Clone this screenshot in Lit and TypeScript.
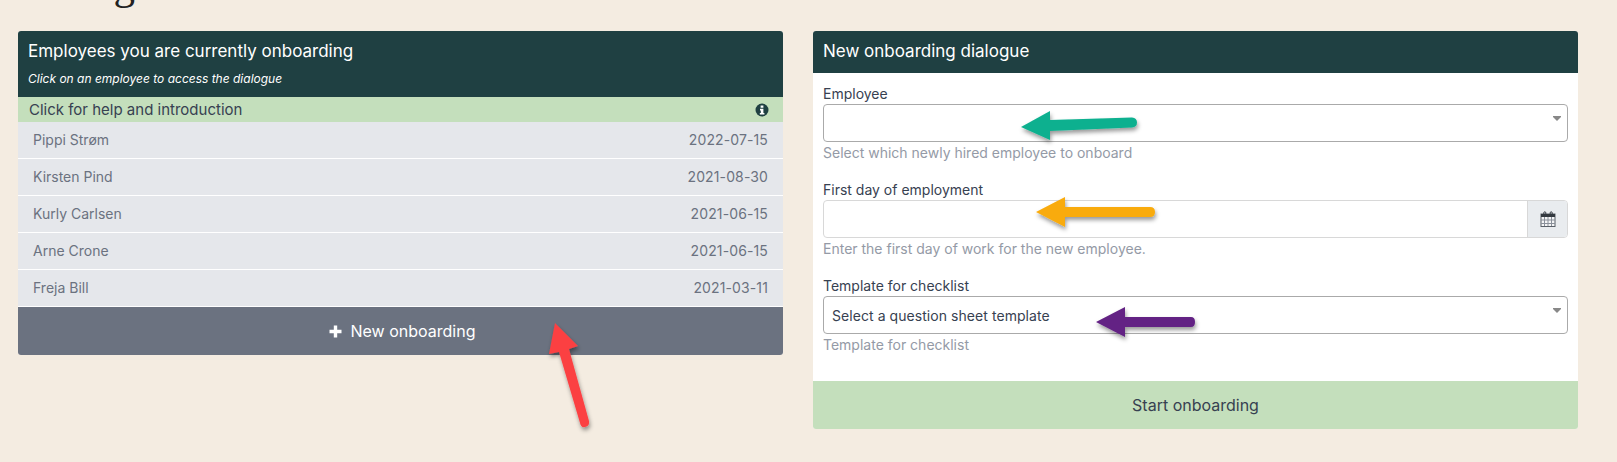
import { LitElement, html, css, svg } from "lit";
import { customElement } from "lit/decorators.js";

const rows: [string, string][] = [
  ["Pippi Strøm", "2022-07-15"],
  ["Kirsten Pind", "2021-08-30"],
  ["Kurly Carlsen", "2021-06-15"],
  ["Arne Crone", "2021-06-15"],
  ["Freja Bill", "2021-03-11"],
];

const caret = svg`<svg class="caret" width="8" height="5" viewBox="0 0 8 5"><path d="M0 0h8v1L4 5 0 1z" fill="#888"/></svg>`;

@customElement("app-root")
export class AppRoot extends LitElement {
  static styles = css`
    :host {
      display: block;
      position: relative;
      width: 1617px;
      height: 462px;
      overflow: hidden;
      background: #f4ece1;
      font-family: Inter, "Liberation Sans", sans-serif;
      font-size: 14px;
      color: #374151;
    }
    .heading {
      position: absolute;
      left: 18px;
      top: -39px;
      margin: 0;
      font: 400 43px/48px "Liberation Serif", serif;
      color: #222;
    }
    .page {
      display: flex;
      align-items: flex-start;
      gap: 30px;
      padding: 31px 0 0 18px;
    }
    .card {
      width: 765px;
      border-radius: 3px;
      overflow: hidden;
      background: #fff;
    }
    .head {
      background: #1f4042;
      color: #fff;
      padding: 8px 10px;
      font-size: 17px;
      line-height: 24px;
      box-sizing: border-box;
    }
    .left .head {
      height: 66px;
    }
    .right .head {
      height: 42px;
    }
    .sub {
      font-size: 12px;
      font-style: italic;
      line-height: 16px;
      margin-top: 8px;
    }
    .help {
      display: flex;
      justify-content: space-between;
      align-items: center;
      height: 25px;
      padding: 0 14px 0 11px;
      background: #c4dfbc;
      color: #374151;
      font-size: 15px;
    }
    .row {
      display: flex;
      justify-content: space-between;
      align-items: center;
      height: 36px;
      box-sizing: content-box;
      padding: 0 15px;
      background: #e5e7eb;
      color: #6b7280;
      border-bottom: 1px solid #fff;
    }
    .row span {
      position: relative;
      top: -1px;
    }
    .date-text {
      letter-spacing: 0.12px;
    }
    .new {
      display: flex;
      justify-content: center;
      align-items: center;
      gap: 9px;
      height: 48px;
      padding-left: 3px;
      background: #6b7280;
      color: #fff;
      font-size: 16px;
    }
    .form {
      padding: 11px 10px 0;
      height: 308px;
      box-sizing: border-box;
    }
    .field {
      height: 96px;
    }
    .label {
      height: 20px;
      line-height: 20px;
      color: #374151;
    }
    .box {
      position: relative;
      display: flex;
      align-items: center;
      height: 38px;
      box-sizing: border-box;
      padding: 0 8px;
      border: 1px solid #aaa;
      border-radius: 4px;
      background: #fff;
      color: #374151;
      font-size: 14px;
      letter-spacing: 0.06px;
    }
    .caret {
      position: absolute;
      right: 6px;
      top: 11px;
    }
    .date {
      display: flex;
      height: 38px;
      box-sizing: border-box;
      border: 1px solid #d8d8d8;
      border-radius: 4px;
      overflow: hidden;
    }
    .date .fill {
      flex: 1;
    }
    .addon {
      display: flex;
      align-items: center;
      justify-content: center;
      width: 39px;
      background: #e9ecef;
      border-left: 1px solid #d8d8d8;
    }
    .hint {
      margin-top: 1px;
      line-height: 20px;
      color: #949aa6;
    }
    .start {
      display: flex;
      align-items: center;
      justify-content: center;
      height: 48px;
      background: #c4dfbc;
      color: #374151;
      font-size: 16px;
    }
    .arrows {
      position: absolute;
      inset: 0;
      pointer-events: none;
    }
  `;

  render() {
    return html`
      <h1 class="heading">Dialogue</h1>
      <div class="page">
        <section class="card left">
          <div class="head">
            Employees you are currently onboarding
            <div class="sub">Click on an employee to access the dialogue</div>
          </div>
          <div class="help">
            <span>Click for help and introduction</span>
            <svg width="14" height="14" viewBox="0 0 14 14">
              <circle cx="7" cy="7" r="6.5" fill="#1f4042" />
              <path d="M5.600 2.600h2.800v2.200H5.600zM5 5.800h3.400v4.200h1v1.600H4.800V10h1V7.400H5z" fill="#fff" />
            </svg>
          </div>
          ${rows.map(([n, d]) => html`<div class="row"><span>${n}</span><span class="date-text">${d}</span></div>`)}
          <div class="new">
            <svg width="13" height="13" viewBox="0 0 13 13"><path d="M4.800 0.500h3.400v4.300h4.300v3.400H8.200v4.300H4.800V8.200H0.500V4.800h4.300z" fill="#fff" /></svg>
            <span>New onboarding</span>
          </div>
        </section>
        <section class="card right">
          <div class="head">New onboarding dialogue</div>
          <div class="form">
            <div class="field">
              <div class="label">Employee</div>
              <div class="box">${caret}</div>
              <div class="hint">Select which newly hired employee to onboard</div>
            </div>
            <div class="field">
              <div class="label">First day of employment</div>
              <div class="date">
                <div class="fill"></div>
                <div class="addon">
                  <svg width="16" height="16" viewBox="0 0 16 16" fill="none">
                    <rect x="1" y="3" width="14" height="12.500" fill="#f4f5f6" stroke="#5a6068" />
                    <path d="M1 3h14v3H1z" fill="#343a40" />
                    <path d="M1 9h14M1 12.500h14M4.500 6v9M8 6v9M11.500 6v9" stroke="#8a909a" stroke-width="1" />
                    <path d="M3.800 5V1.800a1 1 0 0 1 2 0V5M10.200 5V1.800a1 1 0 0 1 2 0V5" stroke="#343a40" stroke-width="1" />
                  </svg>
                </div>
              </div>
              <div class="hint">Enter the first day of work for the new employee.</div>
            </div>
            <div class="field">
              <div class="label">Template for checklist</div>
              <div class="box">Select a question sheet template${caret}</div>
              <div class="hint">Template for checklist</div>
            </div>
          </div>
          <div class="start">Start onboarding</div>
        </section>
      </div>
      <svg class="arrows" width="1617" height="462" viewBox="0 0 1617 462">
        <defs>
          <filter id="s" x="-30%" y="-30%" width="160%" height="160%">
            <feDropShadow dx="1" dy="3" stdDeviation="2" flood-color="#000" flood-opacity=".4" />
          </filter>
        </defs>
        <g filter="url(#s)">
          <path d="M1021 127L1050 111V120L1132 117.500Q1137 118 1137 122.500Q1137 127 1132 127.500L1050 131V140Z" fill="#0cb08f" />
          <path d="M1036 212L1065 197V207H1150Q1155 207 1155 212Q1155 217 1150 217H1065V227Z" fill="#f9ab0b" />
          <path d="M1096 322L1125 307V317H1191Q1195 317 1195 322Q1195 327 1191 327H1125V337Z" fill="#632284" />
          <path d="M555 323L578 346L569 349L589 421Q590 426 585 427Q581 428 580 423L559 352L549 354Z" fill="#fb4143" />
        </g>
      </svg>
    `;
  }
}
